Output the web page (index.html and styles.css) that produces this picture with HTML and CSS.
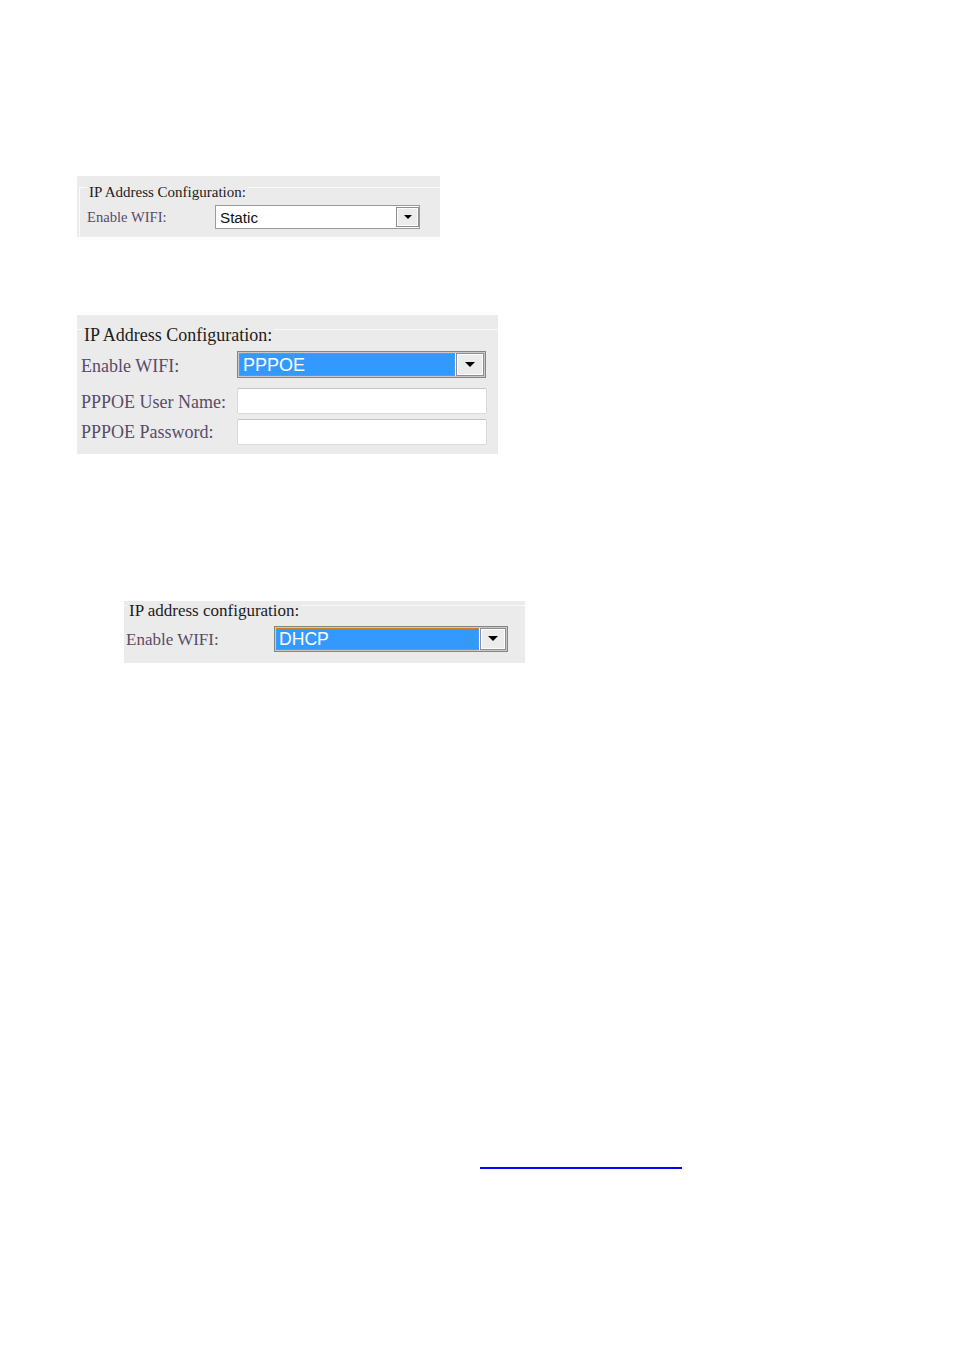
FILE: index.html
```html
<!DOCTYPE html>
<html lang="en">

<head>
    <meta charset="utf-8">
    <title>IP Address Configuration</title>
    <link rel="stylesheet" href="styles.css">
</head>

<body>

    <div class="page">

        <!-- static -->
        <div class="shot shot-static">
            <fieldset class="cfg">
                <legend>IP Address Configuration:</legend>
                <div class="row">
                    <label>Enable WIFI:</label>
                    <div class="combo">
                        <span class="val">Static</span>
                        <span class="drop"><svg viewBox="0 0 8 4"><polygon points="0,0 8,0 4,4" /></svg></span>
                    </div>
                </div>
            </fieldset>
        </div>

        <!-- pppoe -->
        <div class="shot shot-pppoe">
            <fieldset class="cfg">
                <legend>IP Address Configuration:</legend>
                <div class="row">
                    <label>Enable WIFI:</label>
                    <div class="combo valgt">
                        <span class="val">PPPOE</span>
                        <span class="drop"><svg viewBox="0 0 8 4"><polygon points="0,0 8,0 4,4" /></svg></span>
                    </div>
                </div>
                <div class="row row-input">
                    <label>PPPOE User Name:</label>
                    <div class="felt"></div>
                </div>
                <div class="row row-input">
                    <label>PPPOE Password:</label>
                    <div class="felt"></div>
                </div>
            </fieldset>
        </div>

        <!-- dhcp -->
        <div class="shot shot-dhcp">
            <fieldset class="cfg">
                <legend>IP address configuration:</legend>
                <div class="row">
                    <label>Enable WIFI:</label>
                    <div class="combo valgt">
                        <span class="val">DHCP</span>
                        <span class="drop"><svg viewBox="0 0 8 4"><polygon points="0,0 8,0 4,4" /></svg></span>
                    </div>
                </div>
            </fieldset>
        </div>

        <div class="foot">
            <a class="link" href="#"></a>
        </div>

    </div>

</body>

</html>
```

FILE: styles.css
```css
body {
    margin: 0;
    background-color: #fff;
    font-family: "Liberation Serif", "Times New Roman", serif;
}

.page {
    padding-top: 176px;
}

.shot {
    background-color: #ebebeb;
    overflow: hidden;
}

.shot-static {
    margin-left: 77px;
    width: 363px;
    height: 61px;
    font-size: 15px;
}

.shot-pppoe {
    margin: 78px 0 0 77px;
    width: 421px;
    height: 139px;
    font-size: 18px;
}

.shot-dhcp {
    margin: 147px 0 0 124px;
    width: 401px;
    height: 62px;
    font-size: 17px;
}

/* fieldset, cut off on the right and at the bottom */

.cfg {
    border: 1px solid #fafafa;
    border-bottom: 0;
    margin: 0;
    padding: 0 0 40px;
    min-width: 0;
}

.cfg legend {
    padding: 0.645em 2px 0;
    line-height: 1.15em;
    color: #1c1c1c;
}

.shot-static .cfg {
    margin: -3px -40px 0 2px;
    padding-left: 7px;
}

.shot-static legend {
    padding-top: 11px;
}

.shot-pppoe .cfg {
    margin: -2px -40px 0 -3px;
    padding-left: 6px;
}

.shot-pppoe legend {
    margin-left: 1px;
}

.shot-dhcp .cfg {
    margin: -11px -40px 0 -3px;
    padding-left: 4px;
}

.shot-dhcp legend {
    margin-left: 1px;
}

/* rows */

.row {
    display: grid;
    align-items: center;
}

.row label {
    color: #584c68;
    white-space: nowrap;
}

.shot-static .row {
    grid-template-columns: 128px 205px;
    margin-top: 4px;
}

.shot-static .row label {
    font-size: 14.6px;
    padding-top: 1px;
}

.shot-pppoe .row {
    grid-template-columns: 156px 250px;
    margin-top: 6px;
}

.shot-pppoe .row label {
    padding-top: 3px;
}

.shot-pppoe .row-input {
    margin-top: 10px;
}

.shot-pppoe .row-input + .row-input {
    margin-top: 5px;
}

.shot-pppoe .row-input + .row-input label {
    padding-top: 1px;
}

.shot-dhcp .row {
    grid-template-columns: 148px 234px;
    margin-top: 5px;
}

.shot-dhcp .row label {
    padding-top: 2px;
}

/* combo box */

.combo {
    display: flex;
    border: 1px solid #9a9a9a;
    background-color: #fff;
    padding: 1px;
    font-family: "Liberation Sans", Arial, sans-serif;
    color: #111;
}

.combo .val {
    flex: 1;
    display: flex;
    align-items: center;
}

.combo .drop {
    display: flex;
    align-items: center;
    justify-content: center;
    border: 1px solid #8e8e8e;
    box-shadow: inset 0 0 0 1px #fdfdfd;
    background-color: #ececec;
}

.combo svg {
    fill: #000;
}

.combo.valgt {
    border-color: #858585;
    box-shadow: inset 0 0 0 1px #c9c9c9;
}

.combo.valgt .val {
    background-color: #3399ff;
    color: #fff;
    outline: 1px dotted #d9842e;
    outline-offset: -1px;
    margin-right: 1px;
}

.shot-static .combo {
    height: 24px;
    box-sizing: border-box;
    font-size: 15.2px;
}

.shot-static .combo .val {
    padding-left: 3px;
}

.shot-static .combo .drop {
    width: 21px;
    margin-right: -1px;
}

.shot-static .combo svg {
    width: 8px;
    height: 4px;
}

.shot-pppoe .combo {
    height: 27px;
    box-sizing: border-box;
    font-size: 18px;
    margin-right: 1px;
}

.shot-pppoe .combo .val {
    padding: 2px 0 0 4px;
}

.shot-pppoe .combo .drop {
    width: 26px;
}

.shot-pppoe .combo svg,
.shot-dhcp .combo svg {
    width: 10px;
    height: 5px;
}

.shot-dhcp .combo {
    height: 26px;
    box-sizing: border-box;
    font-size: 17.6px;
}

.shot-dhcp .combo .val {
    padding: 2px 0 0 3px;
}

.shot-dhcp .combo .drop {
    width: 24px;
}

/* text fields */

.felt {
    height: 26px;
    box-sizing: border-box;
    background-color: #fff;
    border: 1px solid #dadada;
    border-top-color: #c4c4c4;
    border-radius: 2px;
}

/* link */

.foot {
    margin: 504px 0 0 480px;
}

.link {
    display: block;
    width: 202px;
    height: 0;
    border-bottom: 2px solid #0000ff;
}
```
